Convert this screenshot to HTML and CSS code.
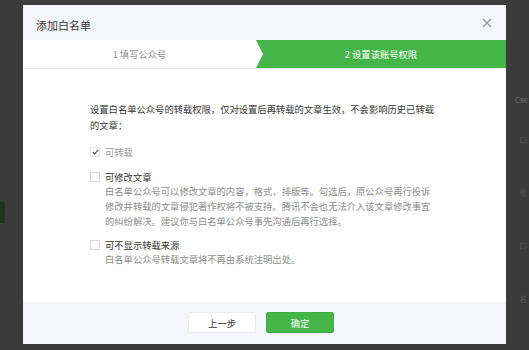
FILE: index.html
```html
<!DOCTYPE html>
<html lang="zh-CN">
<head>
<meta charset="utf-8">
<title>添加白名单</title>
<link rel="stylesheet" href="styles.css">
</head>
<body>
<div class="bgpage">
  <div class="bg-left"><span class="bg-tab"></span></div>
  <div class="bg-right">
    <span class="bg-head">Cxe</span>
    <span class="bg-item">口</span>
    <span class="bg-item">号</span>
    <span class="bg-item">口</span>
    <span class="bg-item">名</span>
  </div>
</div>

<div class="modal">
  <div class="hd">
    <span class="title">添加白名单</span>
    <span class="close">
      <svg width="10" height="10" viewBox="0 0 10 10"><path d="M1 1L9 9M9 1L1 9" stroke="#9a9a9a" stroke-width="1.3" fill="none"/></svg>
    </span>
  </div>
  <div class="steps">
    <div class="step step-done">1 填写公众号</div>
    <div class="step step-cur">2 设置该账号权限</div>
  </div>
  <div class="bd">
    <p class="intro">设置白名单公众号的转载权限，仅对设置后再转载的文章生效，不会影响历史已转载的文章：</p>
    <div class="opt opt-first">
      <div class="opt-row disabled">
        <span class="cb checked"><svg width="7" height="6" viewBox="0 0 7 6"><path d="M0.8 3.2L2.7 5L6.2 0.9" stroke="#5e5e5e" stroke-width="1.2" fill="none"/></svg></span>
        <span class="lbl">可转载</span>
      </div>
    </div>
    <div class="opt opt-second">
      <div class="opt-row">
        <span class="cb"></span>
        <span class="lbl">可修改文章</span>
      </div>
      <p class="desc">白名单公众号可以修改文章的内容，格式，排版等。勾选后，原公众号再行投诉修改并转载的文章侵犯著作权将不被支持。腾讯不会也无法介入该文章修改事宜的纠纷解决。建议你与白名单公众号事先沟通后再行选择。</p>
    </div>
    <div class="opt opt-third">
      <div class="opt-row">
        <span class="cb"></span>
        <span class="lbl">可不显示转载来源</span>
      </div>
      <p class="desc">白名单公众号转载文章将不再由系统注明出处。</p>
    </div>
  </div>
  <div class="ft">
    <button class="btn btn-default">上一步</button>
    <button class="btn btn-primary">确定</button>
  </div>
</div>
</body>
</html>
```

FILE: styles.css
```css
* { box-sizing: border-box; }
html, body {
  margin: 0;
  padding: 0;
}
body {
  width: 529px;
  height: 350px;
  overflow: hidden;
  background: #3b3b3c;
  font-family: "Noto Sans CJK SC", "Noto Sans", sans-serif;
  position: relative;
}

/* background page behind the overlay */
.bgpage {
  display: flex;
  justify-content: space-between;
  height: 350px;
}
.bg-left {
  width: 10px;
  padding-top: 202px;
}
.bg-tab {
  display: block;
  width: 5px;
  height: 21px;
  background: #1d3520;
}
.bg-right {
  width: 24px;
  padding-top: 94px;
  display: flex;
  flex-direction: column;
  align-items: flex-end;
  font-size: 8px;
  line-height: 12px;
  color: #585858;
}
.bg-head {
  color: #6e6e6e;
  margin-bottom: 28px;
  margin-right: 1px;
}
.bg-item {
  margin-bottom: 41px;
  margin-right: 2px;
}

/* modal */
.modal {
  position: absolute;
  left: 23px;
  top: 5px;
  width: 483px;
  height: 339px;
  background: #fff;
  display: flex;
  flex-direction: column;
}
.hd {
  height: 35px;
  background: #f4f5f9;
  display: flex;
  align-items: center;
  justify-content: space-between;
  padding: 0 14px 0 13px;
}
.title {
  font-size: 11px;
  color: #353535;
  margin-top: 5px;
}
.close {
  display: flex;
  width: 10px;
  height: 10px;
  margin-top: 1px;
}
.steps {
  height: 29px;
  display: flex;
  border-bottom: 1px solid #eeeef0;
}
.step {
  font-size: 9.3px;
  display: flex;
  align-items: center;
  justify-content: center;
}
.step-done {
  width: 233px;
  color: #8d8d8d;
  background: #fff;
}
.step-cur {
  flex: 1;
  color: #fff;
  background: #44b549;
  position: relative;
}
.step-cur::before {
  content: "";
  position: absolute;
  left: 0;
  top: 0;
  width: 7px;
  height: 100%;
  background: #fff;
  clip-path: polygon(0 0, 100% 50%, 0 100%);
}

.bd {
  flex: 1;
  padding: 32px 70px 0 67px;
  font-size: 9.3px;
  color: #353535;
}
.intro {
  margin: 0;
  line-height: 16px;
}
.opt-first {
  margin-top: 11px;
}
.opt-second {
  margin-top: 10px;
}
.opt-third {
  margin-top: 8px;
}
.opt-row {
  display: flex;
  align-items: center;
  height: 15px;
}
.cb {
  width: 10px;
  height: 10px;
  border: 1px solid #d9d9d9;
  background: #fff;
  margin-right: 5px;
  display: flex;
  align-items: center;
  justify-content: center;
}
.cb.checked {
  border-color: #e4e4e4;
}
.lbl {
  line-height: 14px;
}
.disabled .lbl {
  color: #9a9a9a;
}
.desc {
  margin: 0;
  padding-left: 15px;
  padding-right: 5px;
  line-height: 15px;
  color: #8d8d8d;
}

.ft {
  height: 42px;
  background: #f4f5f9;
  display: flex;
  justify-content: center;
  align-items: center;
  gap: 10px;
  padding-right: 7px;
  padding-bottom: 1px;
}
.btn {
  width: 68px;
  height: 21px;
  font-family: inherit;
  font-size: 9.3px;
  border-radius: 2px;
  padding: 0;
  cursor: pointer;
}
.btn-default {
  background: #fff;
  border: 1px solid #ececec;
  color: #353535;
}
.btn-primary {
  background: #44b549;
  border: 1px solid #3fae44;
  color: #fff;
}
```
